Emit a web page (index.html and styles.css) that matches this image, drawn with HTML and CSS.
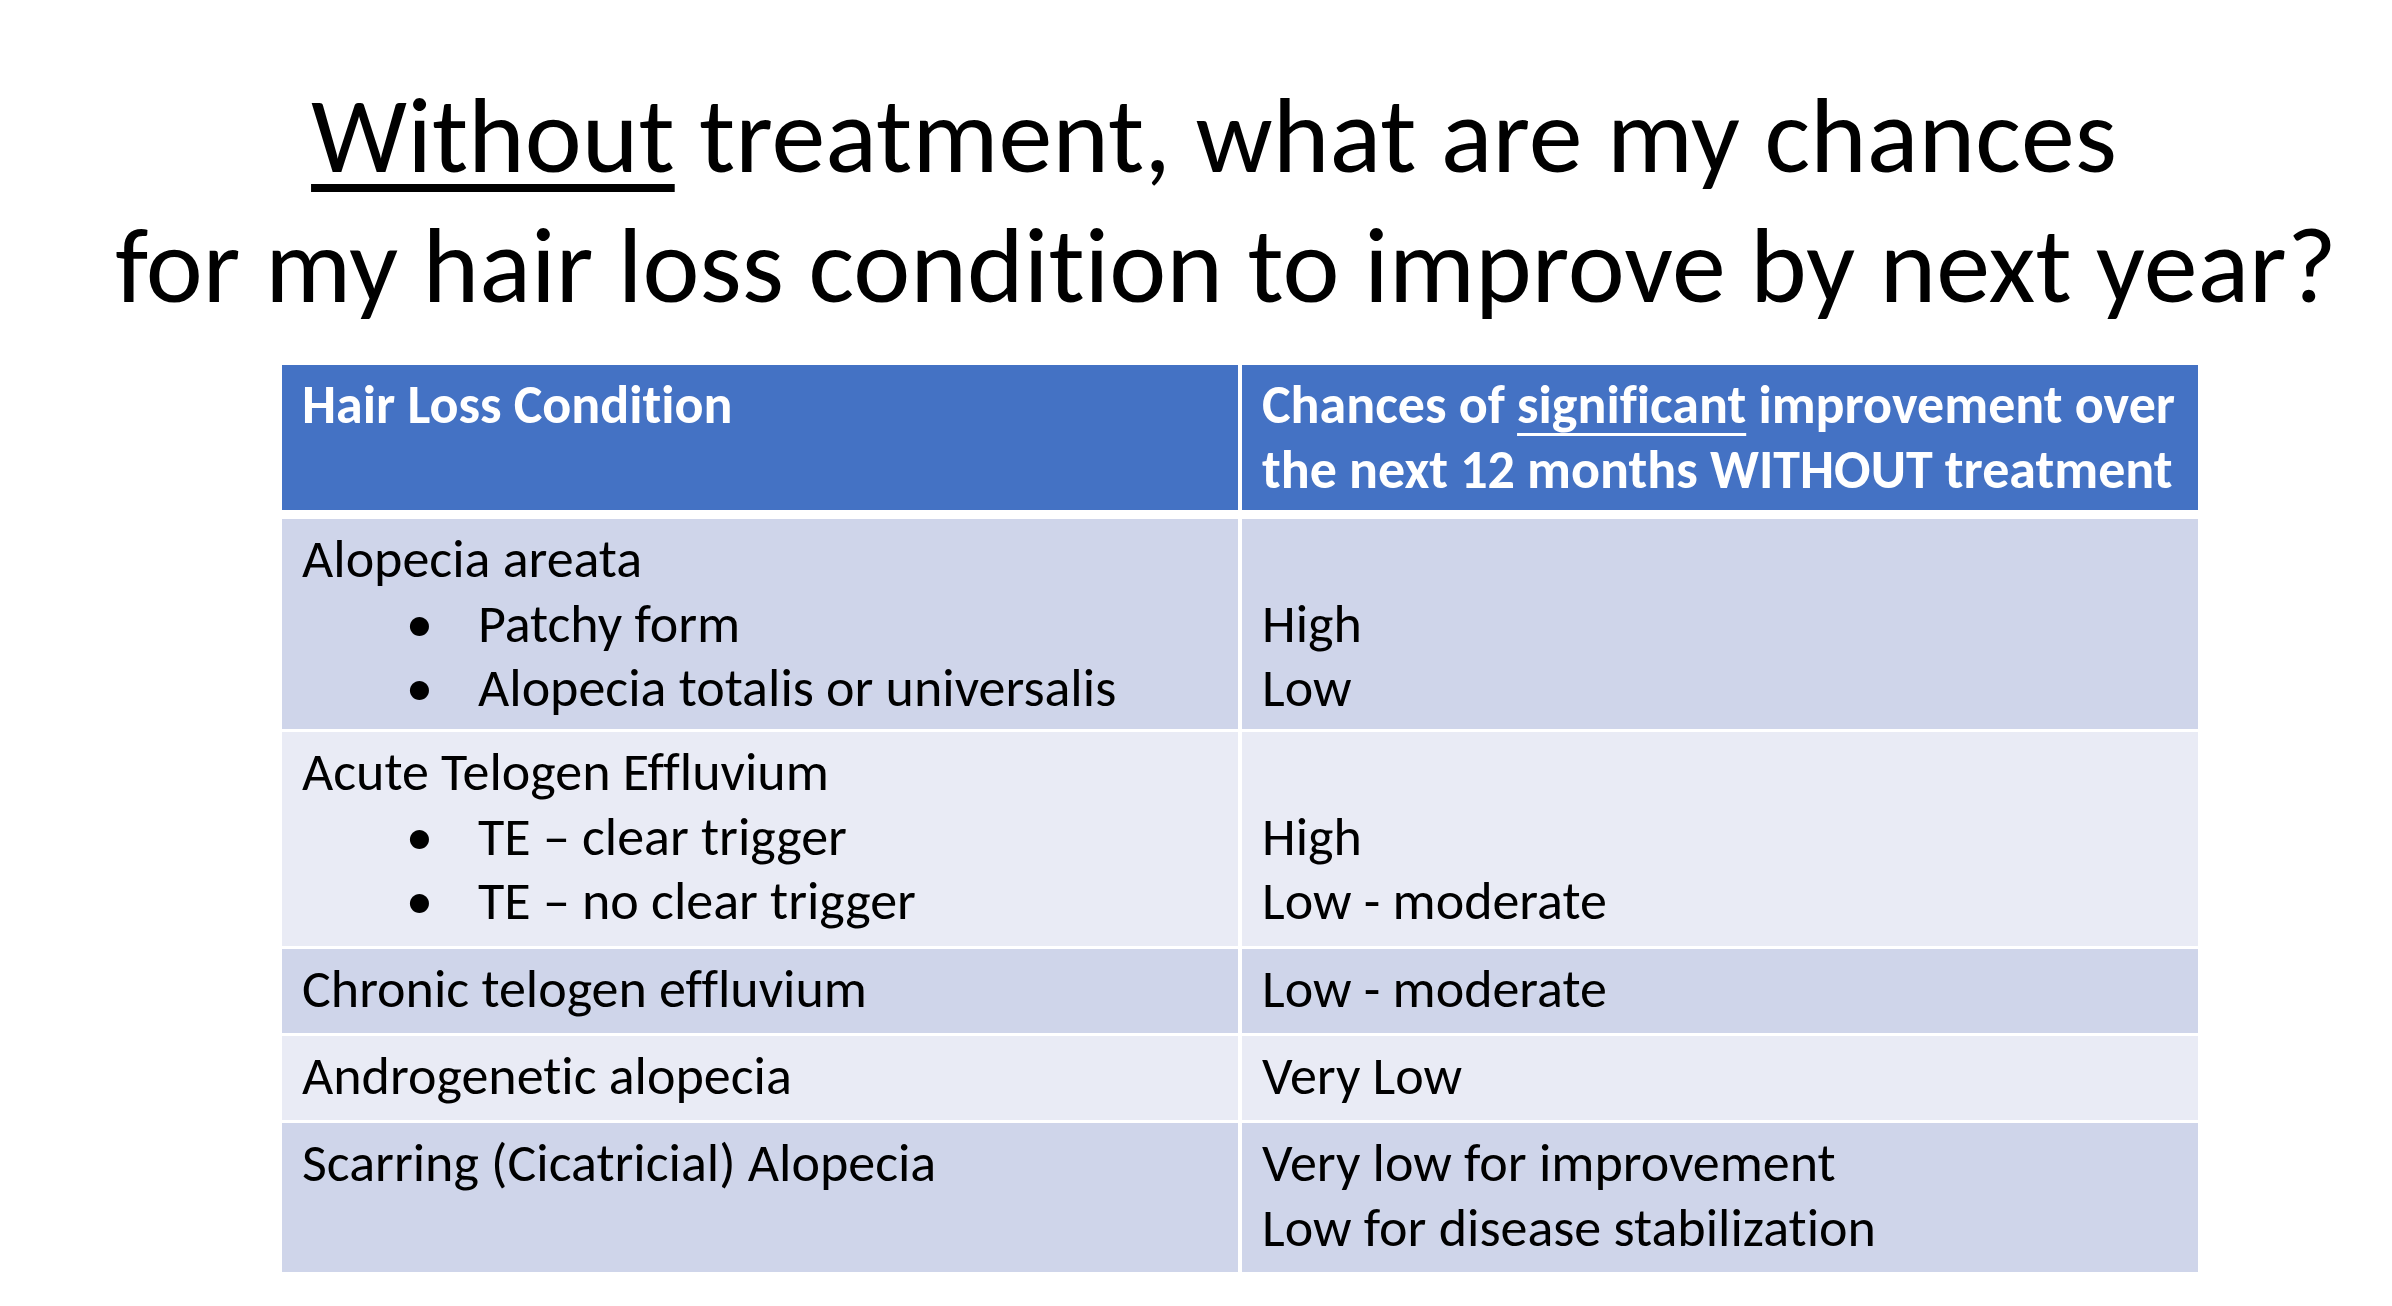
FILE: index.html
```html
<!DOCTYPE html>
<html lang="en">
<head>
<meta charset="utf-8">
<title>Hair loss chances without treatment</title>
<link rel="stylesheet" href="styles.css">
</head>
<body>
<div class="slide">
  <h1 class="title"><span class="line line-1"><span class="ul">Without</span> treatment, what are my chances</span><span class="line">for my hair loss condition to improve by next year?</span></h1>
  <div class="table">
    <div class="cell head">Hair Loss Condition</div>
    <div class="cell head">Chances of <span class="ul-sm">significant</span> improvement over the next 12 months WITHOUT treatment</div>

    <div class="cell odd">
      <div>Alopecia areata</div>
      <div class="bullet"><span class="dot">•</span><span>Patchy form</span></div>
      <div class="bullet"><span class="dot">•</span><span>Alopecia totalis or universalis</span></div>
    </div>
    <div class="cell odd">
      <div>&nbsp;</div>
      <div>High</div>
      <div>Low</div>
    </div>

    <div class="cell even">
      <div>Acute Telogen Effluvium</div>
      <div class="bullet"><span class="dot">•</span><span>TE – clear trigger</span></div>
      <div class="bullet"><span class="dot">•</span><span>TE – no clear trigger</span></div>
    </div>
    <div class="cell even">
      <div>&nbsp;</div>
      <div>High</div>
      <div>Low - moderate</div>
    </div>

    <div class="cell odd">Chronic telogen effluvium</div>
    <div class="cell odd">Low - moderate</div>

    <div class="cell even">Androgenetic alopecia</div>
    <div class="cell even">Very Low</div>

    <div class="cell odd">Scarring (Cicatricial) Alopecia</div>
    <div class="cell odd">
      <div>Very low for improvement</div>
      <div>Low for disease stabilization</div>
    </div>
  </div>
</div>
</body>
</html>
```
FILE: styles.css
```css
html, body {
  margin: 0;
  padding: 0;
  background: #ffffff;
}

body {
  font-family: Carlito, "Liberation Sans", sans-serif;
  font-variant-ligatures: none;
  font-feature-settings: "liga" 0, "clig" 0;
  color: #000000;
}

.slide {
  width: 2392px;
  height: 1306px;
  overflow: hidden;
}

.title {
  margin: 0;
  padding: 71px 0 0 60px;
  font-size: 108px;
  line-height: 129.6px;
  font-weight: normal;
  text-align: center;
}

.line {
  display: block;
}

.line-1 {
  padding-right: 24px;
}

.ul {
  text-decoration: underline;
  text-decoration-thickness: 8px;
  text-underline-offset: 12px;
}

.table {
  display: grid;
  grid-template-columns: 956px 956px;
  grid-template-rows: 151px 210px 214px 84px 84px 149px;
  column-gap: 4px;
  row-gap: 3px;
  margin: 35px 0 0 282px;
  font-size: 54px;
  line-height: 64.5px;
}

.cell {
  padding: 8px 20px 0 20px;
}

.head {
  background: #4472c4;
  color: #ffffff;
  font-weight: bold;
  margin-bottom: 6px;
}

.ul-sm {
  text-decoration: underline;
  text-decoration-thickness: 3px;
  text-underline-offset: 10px;
}

.odd {
  background: #cfd5ea;
}

.even {
  background: #e9ebf5;
}

.bullet {
  display: flex;
  padding-left: 104px;
}

.dot {
  width: 72px;
  flex: none;
}
```
